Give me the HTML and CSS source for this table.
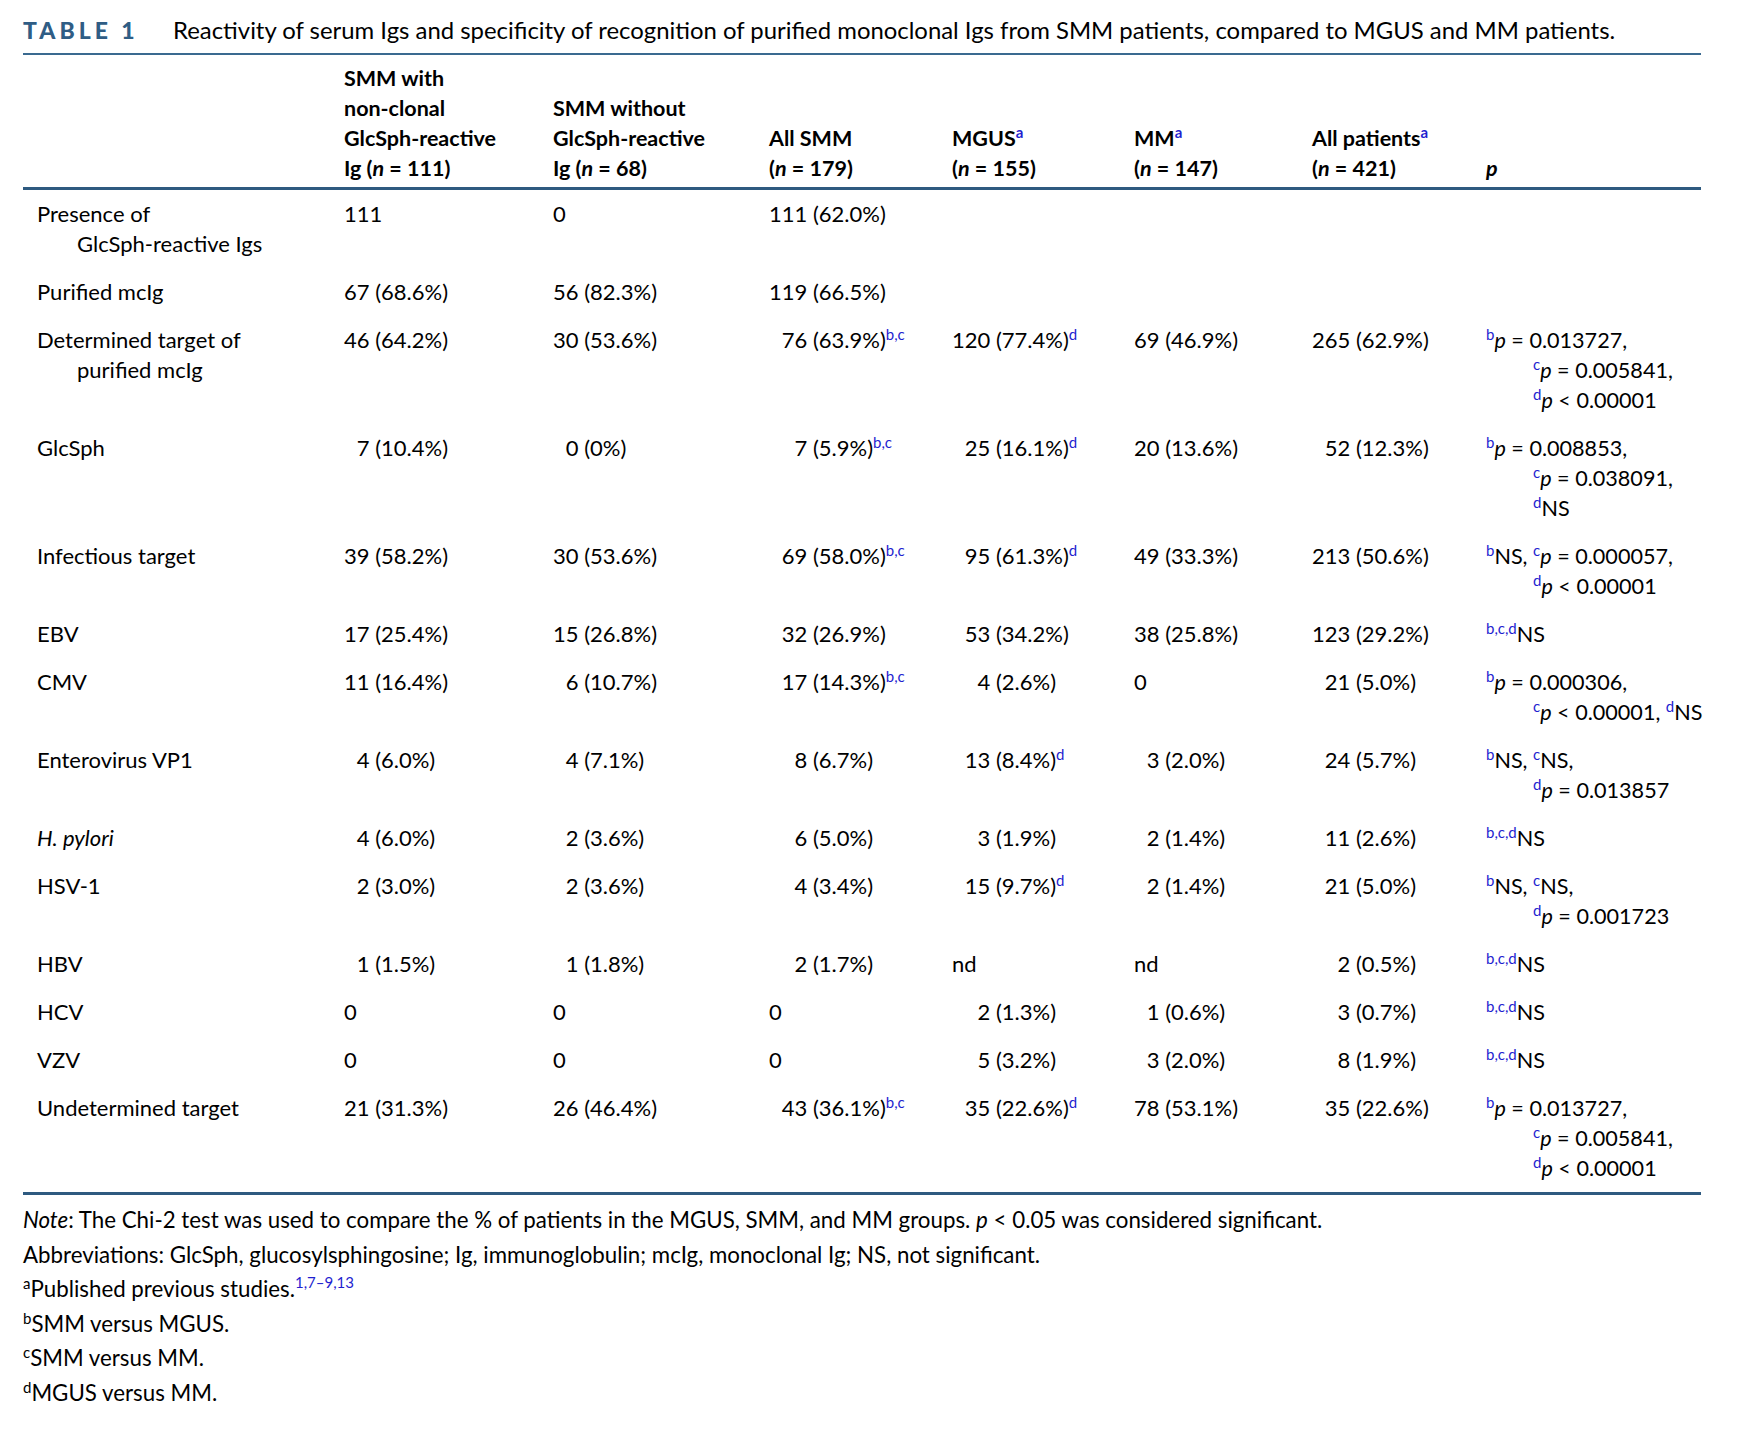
FILE: index.html
```html
<!DOCTYPE html>
<html lang="en">
<head>
<meta charset="utf-8">
<title>Table 1</title>
<link rel="stylesheet" href="styles.css">
</head>
<body>
<div class="page">
  <div class="caption">
    <span class="label">TABLE 1</span>
    <span class="caption-text">Reactivity of serum Igs and specificity of recognition of purified monoclonal Igs from SMM patients, compared to MGUS and MM patients.</span>
  </div>
  <table class="data">
    <colgroup>
      <col class="c0"><col class="c1"><col class="c2"><col class="c3"><col class="c4"><col class="c5"><col class="c6"><col class="c7">
    </colgroup>
    <thead>
      <tr>
        <th></th>
        <th>SMM with<br>non-clonal<br>GlcSph-reactive<br>Ig (<i>n</i> = 111)</th>
        <th>SMM without<br>GlcSph-reactive<br>Ig (<i>n</i> = 68)</th>
        <th>All SMM<br>(<i>n</i> = 179)</th>
        <th>MGUS<sup class="fn">a</sup><br>(<i>n</i> = 155)</th>
        <th>MM<sup class="fn">a</sup><br>(<i>n</i> = 147)</th>
        <th>All patients<sup class="fn">a</sup><br>(<i>n</i> = 421)</th>
        <th><i>p</i></th>
      </tr>
    </thead>
    <tbody>
      <tr>
        <td class="row-label">Presence of<br>GlcSph-reactive Igs</td>
        <td>111</td><td>0</td><td>111 (62.0%)</td><td></td><td></td><td></td><td></td>
      </tr>
      <tr>
        <td class="row-label">Purified mcIg</td>
        <td>67 (68.6%)</td><td>56 (82.3%)</td><td>119 (66.5%)</td><td></td><td></td><td></td><td></td>
      </tr>
      <tr>
        <td class="row-label">Determined target of<br>purified mcIg</td>
        <td>46 (64.2%)</td><td>30 (53.6%)</td>
        <td>&#8199;76 (63.9%)<sup class="fn">b,c</sup></td>
        <td>120 (77.4%)<sup class="fn">d</sup></td>
        <td>69 (46.9%)</td><td>265 (62.9%)</td>
        <td class="pval"><sup class="fn">b</sup><i>p</i> = 0.013727,<br><sup class="fn">c</sup><i>p</i> = 0.005841,<br><sup class="fn">d</sup><i>p</i> &lt; 0.00001</td>
      </tr>
      <tr>
        <td class="row-label">GlcSph</td>
        <td>&#8199;7 (10.4%)</td><td>&#8199;0 (0%)</td>
        <td>&#8199;&#8199;7 (5.9%)<sup class="fn">b,c</sup></td>
        <td>&#8199;25 (16.1%)<sup class="fn">d</sup></td>
        <td>20 (13.6%)</td><td>&#8199;52 (12.3%)</td>
        <td class="pval"><sup class="fn">b</sup><i>p</i> = 0.008853,<br><sup class="fn">c</sup><i>p</i> = 0.038091,<br><sup class="fn">d</sup>NS</td>
      </tr>
      <tr>
        <td class="row-label">Infectious target</td>
        <td>39 (58.2%)</td><td>30 (53.6%)</td>
        <td>&#8199;69 (58.0%)<sup class="fn">b,c</sup></td>
        <td>&#8199;95 (61.3%)<sup class="fn">d</sup></td>
        <td>49 (33.3%)</td><td>213 (50.6%)</td>
        <td class="pval"><sup class="fn">b</sup>NS, <sup class="fn">c</sup><i>p</i> = 0.000057,<br><sup class="fn">d</sup><i>p</i> &lt; 0.00001</td>
      </tr>
      <tr>
        <td class="row-label">EBV</td>
        <td>17 (25.4%)</td><td>15 (26.8%)</td>
        <td>&#8199;32 (26.9%)</td><td>&#8199;53 (34.2%)</td>
        <td>38 (25.8%)</td><td>123 (29.2%)</td>
        <td class="pval"><sup class="fn">b,c,d</sup>NS</td>
      </tr>
      <tr>
        <td class="row-label">CMV</td>
        <td>11 (16.4%)</td><td>&#8199;6 (10.7%)</td>
        <td>&#8199;17 (14.3%)<sup class="fn">b,c</sup></td>
        <td>&#8199;&#8199;4 (2.6%)</td>
        <td>0</td><td>&#8199;21 (5.0%)</td>
        <td class="pval"><sup class="fn">b</sup><i>p</i> = 0.000306,<br><sup class="fn">c</sup><i>p</i> &lt; 0.00001, <sup class="fn">d</sup>NS</td>
      </tr>
      <tr>
        <td class="row-label">Enterovirus VP1</td>
        <td>&#8199;4 (6.0%)</td><td>&#8199;4 (7.1%)</td>
        <td>&#8199;&#8199;8 (6.7%)</td>
        <td>&#8199;13 (8.4%)<sup class="fn">d</sup></td>
        <td>&#8199;3 (2.0%)</td><td>&#8199;24 (5.7%)</td>
        <td class="pval"><sup class="fn">b</sup>NS, <sup class="fn">c</sup>NS,<br><sup class="fn">d</sup><i>p</i> = 0.013857</td>
      </tr>
      <tr>
        <td class="row-label"><i>H. pylori</i></td>
        <td>&#8199;4 (6.0%)</td><td>&#8199;2 (3.6%)</td>
        <td>&#8199;&#8199;6 (5.0%)</td><td>&#8199;&#8199;3 (1.9%)</td>
        <td>&#8199;2 (1.4%)</td><td>&#8199;11 (2.6%)</td>
        <td class="pval"><sup class="fn">b,c,d</sup>NS</td>
      </tr>
      <tr>
        <td class="row-label">HSV-1</td>
        <td>&#8199;2 (3.0%)</td><td>&#8199;2 (3.6%)</td>
        <td>&#8199;&#8199;4 (3.4%)</td>
        <td>&#8199;15 (9.7%)<sup class="fn">d</sup></td>
        <td>&#8199;2 (1.4%)</td><td>&#8199;21 (5.0%)</td>
        <td class="pval"><sup class="fn">b</sup>NS, <sup class="fn">c</sup>NS,<br><sup class="fn">d</sup><i>p</i> = 0.001723</td>
      </tr>
      <tr>
        <td class="row-label">HBV</td>
        <td>&#8199;1 (1.5%)</td><td>&#8199;1 (1.8%)</td>
        <td>&#8199;&#8199;2 (1.7%)</td><td>nd</td>
        <td>nd</td><td>&#8199;&#8199;2 (0.5%)</td>
        <td class="pval"><sup class="fn">b,c,d</sup>NS</td>
      </tr>
      <tr>
        <td class="row-label">HCV</td>
        <td>0</td><td>0</td><td>0</td>
        <td>&#8199;&#8199;2 (1.3%)</td><td>&#8199;1 (0.6%)</td><td>&#8199;&#8199;3 (0.7%)</td>
        <td class="pval"><sup class="fn">b,c,d</sup>NS</td>
      </tr>
      <tr>
        <td class="row-label">VZV</td>
        <td>0</td><td>0</td><td>0</td>
        <td>&#8199;&#8199;5 (3.2%)</td><td>&#8199;3 (2.0%)</td><td>&#8199;&#8199;8 (1.9%)</td>
        <td class="pval"><sup class="fn">b,c,d</sup>NS</td>
      </tr>
      <tr>
        <td class="row-label">Undetermined target</td>
        <td>21 (31.3%)</td><td>26 (46.4%)</td>
        <td>&#8199;43 (36.1%)<sup class="fn">b,c</sup></td>
        <td>&#8199;35 (22.6%)<sup class="fn">d</sup></td>
        <td>78 (53.1%)</td><td>&#8199;35 (22.6%)</td>
        <td class="pval"><sup class="fn">b</sup><i>p</i> = 0.013727,<br><sup class="fn">c</sup><i>p</i> = 0.005841,<br><sup class="fn">d</sup><i>p</i> &lt; 0.00001</td>
      </tr>
    </tbody>
  </table>
  <div class="notes">
    <p><i>Note</i>: The Chi-2 test was used to compare the % of patients in the MGUS, SMM, and MM groups. <i>p</i> &lt; 0.05 was considered significant.</p>
    <p>Abbreviations: GlcSph, glucosylsphingosine; Ig, immunoglobulin; mcIg, monoclonal Ig; NS, not significant.</p>
    <p><sup class="nfn">a</sup>Published previous studies.<sup class="ref">1,7&#8211;9,13</sup></p>
    <p><sup class="nfn">b</sup>SMM versus MGUS.</p>
    <p><sup class="nfn">c</sup>SMM versus MM.</p>
    <p><sup class="nfn">d</sup>MGUS versus MM.</p>
  </div>
</div>
</body>
</html>
```
FILE: styles.css
```css
html, body {
  margin: 0;
  padding: 0;
  background: #ffffff;
}

body {
  font-family: Lato, "Liberation Sans", sans-serif;
  font-size: 22px;
  color: #000000;
}

.page {
  padding: 15px 41px 0 23px;
}

.caption {
  display: flex;
  align-items: baseline;
  line-height: 30px;
  padding-bottom: 8px;
  border-bottom: 2px solid #3a6a90;
}

.label {
  font-weight: 900;
  font-size: 23px;
  letter-spacing: 4px;
  color: #2f5d85;
  width: 150px;
  flex: none;
}

.caption-text {
  font-size: 23.9px;
  white-space: nowrap;
}

.data {
  width: 100%;
  table-layout: fixed;
  border-collapse: collapse;
  line-height: 30px;
}

.c0 { width: 307px; }
.c1 { width: 209px; }
.c2 { width: 216px; }
.c3 { width: 183px; }
.c4 { width: 182px; }
.c5 { width: 178px; }
.c6 { width: 174px; }
.c7 { width: 229px; }

.data th {
  font-weight: 700;
  font-size: 21.5px;
  text-align: left;
  vertical-align: bottom;
  padding: 8px 0 4px 14px;
  border-bottom: 3px solid #2e5a80;
  white-space: nowrap;
}

.data td {
  text-align: left;
  vertical-align: top;
  padding: 9px 0 9px 14px;
  white-space: nowrap;
}

.data tbody tr:last-child td {
  padding-bottom: 9px;
  border-bottom: 3px solid #2e5a80;
}

.data td.row-label {
  padding-left: 54px;
  text-indent: -40px;
}

.data td.pval {
  padding-left: 61px;
  text-indent: -47px;
  font-size: 21.6px;
}

.fn {
  color: #1f1fd0;
  font-size: 15px;
  line-height: 0;
  vertical-align: 8px;
  font-weight: 400;
}

th .fn {
  font-weight: 700;
}

.notes {
  padding-top: 8px;
  font-size: 22.3px;
}

.notes p {
  margin: 0;
  line-height: 34.6px;
}

.nfn {
  font-size: 15px;
  line-height: 0;
  vertical-align: 8px;
}

.ref {
  color: #1f1fd0;
  font-size: 15px;
  line-height: 0;
  vertical-align: 9px;
}
```
